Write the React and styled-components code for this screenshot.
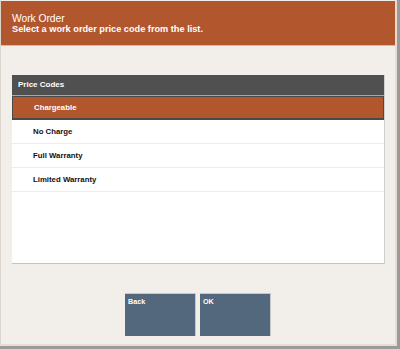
import styled, { createGlobalStyle } from "styled-components";

const GlobalStyle = createGlobalStyle`
  html, body { margin: 0; padding: 0; background: #9a9a9a; }
  body { font-family: "Liberation Sans", Arial, sans-serif; }
`;

const codes = ["Chargeable", "No Charge", "Full Warranty", "Limited Warranty"];

export default function App() {
  return (
    <>
      <GlobalStyle />
      <Frame>
        <Header>
          <Title>Work Order</Title>
          <Prompt>Select a work order price code from the list.</Prompt>
        </Header>
        <Body>
          <ListPanel>
            <ListHeader>Price Codes</ListHeader>
            {codes.map((c, i) => (
              <Row key={c} selected={i === 0}>{c}</Row>
            ))}
          </ListPanel>
          <Buttons>
            <ActionButton>Back</ActionButton>
            <ActionButton>OK</ActionButton>
          </Buttons>
        </Body>
      </Frame>
    </>
  );
}

const Frame = styled.div`
  width: 397px;
  height: 346px;
  box-sizing: border-box;
  background: #f2efea;
  border-left: 1px solid #ddd6cc;
  border-right: 2px solid #e8ddd0;
  border-bottom: 2px solid #e8ddd0;
  display: flex;
  flex-direction: column;
`;

const Header = styled.div`
  margin-top: 1px;
  height: 45px;
  background: #b2562e;
  color: #fff;
  padding: 12px 0 0 11px;
  box-sizing: border-box;
  border-bottom: 1px solid #d9b7a6;
`;

const Title = styled.div`
  font-size: 10.3px;
  line-height: 11px;
  letter-spacing: -0.05px;
`;

const Prompt = styled.div`
  font-size: 9.2px;
  font-weight: bold;
  line-height: 11px;
`;

const Body = styled.div`
  flex: 1;
  display: flex;
  flex-direction: column;
  padding: 29px 11px 0 11px;
`;

const ListPanel = styled.div`
  width: 373px;
  height: 189px;
  box-sizing: border-box;
  background: #fff;
  border-right: 1px solid #cfcfcf;
  border-bottom: 1px solid #c3c3c3;
`;

const ListHeader = styled.div`
  height: 20px;
  background: #505050;
  color: #fff;
  font-size: 8px;
  font-weight: bold;
  line-height: 20px;
  padding-left: 6px;
  border-bottom: 1px solid #a8a8a8;
`;

const Row = styled.div`
  height: 24px;
  box-sizing: border-box;
  display: flex;
  align-items: center;
  padding-left: 21px;
  font-size: 7.8px;
  font-weight: bold;
  color: ${({ selected }) => (selected ? "#fff" : "#111")};
  background: ${({ selected }) => (selected ? "#b2562e" : "#fff")};
  border: ${({ selected }) => (selected ? "1px solid #4a4a4a" : "none")};
  border-bottom: ${({ selected }) => (selected ? "2px solid #4a4a4a" : "1px solid #ececec")};
`;

const Buttons = styled.div`
  display: flex;
  justify-content: center;
  gap: 4px;
  margin-top: 29px;
`;

const ActionButton = styled.div`
  width: 71px;
  height: 43px;
  box-sizing: border-box;
  background: #53687c;
  color: #fff;
  font-size: 7.2px;
  font-weight: bold;
  padding: 3px 0 0 3px;
  border-right: 1px solid #c8c8c8;
  border-top: 1px solid #c8c8c8;
`;
